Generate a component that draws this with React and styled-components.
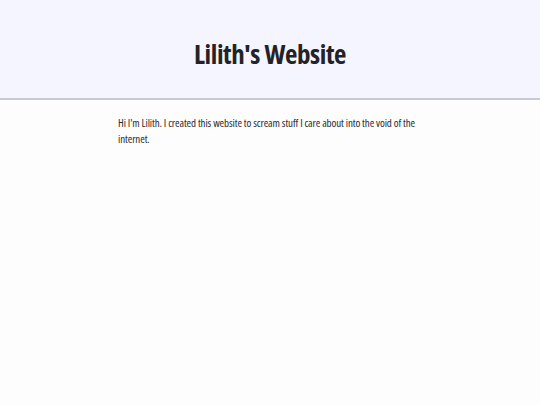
import React from "react";
import styled, { createGlobalStyle } from "styled-components";

const GlobalStyle = createGlobalStyle`
  html, body {
    margin: 0;
    padding: 0;
    background: #fdfdfd;
  }
  body {
    font-family: "Open Sans", "Noto Sans", sans-serif;
    font-stretch: 75%;
    color: #222226;
  }
`;

const Header = styled.header`
  box-sizing: border-box;
  height: 100px;
  padding-top: 8px;
  display: flex;
  align-items: center;
  justify-content: center;
  background: #f5f5ff;
  border-bottom: 2px solid #c9c9d6;
`;

const Title = styled.h1`
  margin: 0;
  font-size: 27px;
  font-weight: 700;
  letter-spacing: -0.4px;
  color: #232327;
`;

const Main = styled.main`
  width: 304px;
  margin: 0 auto;
  padding-top: 15px;
`;

const Intro = styled.p`
  margin: 0;
  font-size: 11px;
  letter-spacing: -0.1px;
  line-height: 16px;
  color: #2a2a2e;
`;

const App = () => {
  return (
    <>
      <GlobalStyle />
      <Header>
        <Title>Lilith's Website</Title>
      </Header>
      <Main>
        <Intro>
          Hi I'm Lilith. I created this website to scream stuff I care about
          into the void of the internet.
        </Intro>
      </Main>
    </>
  );
};

export default App;
